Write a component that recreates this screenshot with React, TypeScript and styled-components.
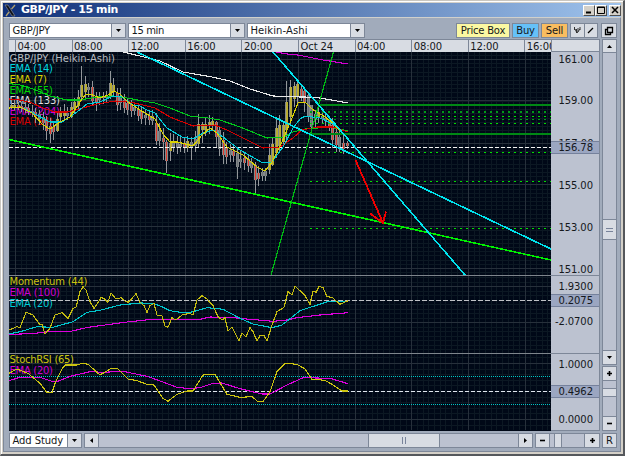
import React from 'react';
import styled, { createGlobalStyle } from 'styled-components';

// ---------------------------------------------------------------------------
// Colors
// ---------------------------------------------------------------------------
const colors = {
  frame: '#d4d0c8',
  body: '#a1abbb',
  panel: '#bcc2d0',
  control: '#d8dce3',
  border: '#7d8798',
  highlight: '#9ba6c1',
  chart: '#000817',
  gridMinor: '#0c1823',
  gridMajor: '#27303b',
  divider: '#7e858c',
  text: '#15181c',
};

// ---------------------------------------------------------------------------
// Chart data, in window coordinates
// ---------------------------------------------------------------------------
const LEFT = 9;
const WIDTH = 542;
const BAR_START = 11.2;
const BAR_STEP = 3.535;
const HOUR_STEP = 56.62;

const TIMES = ['04:00', '08:00', '12:00', '16:00', '20:00', 'Oct 24', '04:00', '08:00', '12:00', '16:00'];

type Candle = [number, number, number, number, ('u' | 'd' | 'n')];

// high, body top, body bottom, low, direction
const CANDLES: Candle[] = [
  [101, 105, 108, 109, 'u'], [100, 105, 108, 110, 'u'], [102, 105, 107, 110, 'd'], [102, 106, 108, 112, 'd'],
  [103, 107, 110, 113, 'n'], [104, 108, 112, 115, 'd'], [105, 111, 113, 117, 'n'], [108, 112, 116, 123, 'd'],
  [110, 114, 119, 125, 'n'], [112, 117, 123, 130, 'd'], [116, 120, 131, 140, 'd'], [118, 126, 134, 143, 'd'],
  [122, 127, 132, 140, 'd'], [112, 119, 131, 132, 'u'], [107, 112, 117, 122, 'u'], [104, 112, 116, 120, 'u'],
  [107, 113, 116, 120, 'n'], [102, 107, 117, 118, 'u'], [98, 102, 109, 114, 'u'], [90, 97, 106, 110, 'u'],
  [66, 85, 97, 100, 'u'], [76, 84, 92, 98, 'u'], [83, 87, 90, 97, 'n'], [81, 87, 101, 105, 'd'],
  [92, 96, 103, 111, 'd'], [92, 96, 100, 105, 'n'], [92, 96, 98, 104, 'n'], [91, 95, 98, 103, 'n'],
  [71, 83, 96, 99, 'u'], [78, 85, 92, 97, 'u'], [88, 93, 105, 111, 'd'], [88, 97, 103, 110, 'n'],
  [94, 100, 108, 113, 'd'], [98, 103, 110, 115, 'd'], [100, 104, 111, 117, 'd'], [103, 107, 111, 115, 'n'],
  [104, 109, 116, 121, 'd'], [107, 111, 119, 124, 'd'], [110, 115, 118, 125, 'n'], [112, 116, 120, 125, 'd'],
  [110, 116, 121, 125, 'n'], [113, 123, 141, 145, 'd'], [123, 131, 141, 146, 'n'], [128, 138, 142, 160, 'd'],
  [140, 142, 161, 173, 'd'], [133, 143, 151, 161, 'u'], [134, 143, 147, 152, 'n'], [136, 143, 148, 154, 'n'],
  [137, 144, 147, 152, 'n'], [138, 144, 148, 153, 'd'], [136, 141, 148, 152, 'u'], [137, 142, 147, 160, 'n'],
  [131, 139, 146, 152, 'n'], [114, 124, 144, 147, 'u'], [122, 124, 130, 143, 'u'], [117, 124, 130, 136, 'u'],
  [115, 122, 126, 134, 'u'], [117, 121, 126, 131, 'u'], [121, 122, 137, 147, 'd'], [126, 130, 149, 156, 'n'],
  [132, 140, 155, 164, 'd'], [142, 147, 157, 164, 'd'], [144, 150, 155, 162, 'n'], [145, 151, 156, 162, 'd'],
  [148, 153, 167, 179, 'n'], [150, 159, 162, 168, 'n'], [153, 158, 163, 170, 'd'], [154, 159, 166, 172, 'd'],
  [158, 162, 168, 173, 'n'], [162, 165, 180, 193, 'd'], [166, 173, 179, 186, 'd'], [168, 172, 176, 181, 'n'],
  [168, 171, 176, 181, 'n'], [144, 155, 170, 174, 'u'], [138, 144, 165, 166, 'u'], [119, 128, 153, 158, 'u'],
  [115, 125, 146, 151, 'u'], [122, 125, 142, 147, 'u'], [81, 102, 130, 143, 'u'], [80, 87, 117, 125, 'u'],
  [82, 86, 99, 107, 'u'], [80, 84, 96, 104, 'u'], [85, 89, 97, 101, 'd'], [87, 91, 103, 112, 'd'],
  [92, 95, 117, 122, 'n'], [105, 105, 127, 135, 'n'], [110, 114, 119, 127, 'n'], [107, 112, 117, 123, 'u'],
  [111, 116, 119, 124, 'n'], [113, 118, 121, 128, 'n'], [116, 120, 126, 131, 'd'], [118, 125, 140, 148, 'd'],
  [127, 132, 145, 152, 'd'], [131, 137, 148, 152, 'n'], [133, 143, 149, 154, 'd'], [141, 143, 146, 149, 'd'],
];

const BODY_FILL = { u: '#b9ad35', d: '#dd3a2c', n: '#6d7378' };

const PRICE_LINES = [
  { color: '#00c81a', points: '9,83.5 20,85 33,89 50,96 67,100 80,100 97,97 113,96 127,98 143,101 155,103 170,108 190,116 208,118 220,120 240,127 267,138 283,137.5 293,132 305,129 330,127 348,131' },
  { color: '#d40000', points: '9,99 20,100 32,103 43,108 55,112 68,112 83,108 97,104 115,101 130,102 143,105 155,108 170,117 193,126 215,125 227,130 247,140 263,148 280,147 293,138 302,130 317,127 333,127 348,132' },
  { color: '#e8e8e8', points: '123,52 140,56 160,61 183,72 212,77 230,81 250,89 273,96 300,97 305,97 320,98 348,103' },
  { color: '#d400d4', points: '276,52 287,54 298,55 323,60 348,64' },
  { color: '#00ccd8', points: '9,108 20,107 33,113 50,122 62,122 73,115 87,104 100,102 113,96 122,97 133,105 140,106 147,110 155,113 167,128 182,137 193,139 203,133 213,130 223,137 240,150 263,163 272,162 283,147 293,128 300,119 305,116 320,118 333,124 348,139' },
  { color: '#dcd400', points: '9,108 20,107 32,113 43,125 50,129 60,122 70,117 78,105 85,95 90,94 100,98 108,95 114,91 120,94 128,102 140,110 155,119 163,134 170,142 178,142 193,146 202,135 210,128 217,133 227,147 243,155 257,167 265,171 272,162 282,142 292,118 298,103 305,102 312,109 325,117 333,123 342,133 348,139' },
];

const MOMENTUM_LINES = [
  { color: '#dd00dd', points: '9,334.5 33,333.5 50,331.5 70,331.5 87,327.5 127,322 150,319.5 200,319.3 210,317 233,317.7 250,319.3 273,321.3 287,320 297,317.7 320,315 348,312.7' },
  { color: '#00c4cc', points: '9,334 20,331.7 37,326.7 53,327.3 73,321.7 87,312.3 100,310.3 120,305 140,303 153,303.3 162,306.7 170,310.7 183,312.7 190,312.5 207,307.7 223,309.3 240,318.3 253,324 272,327.7 282,325 300,310.7 328,301.5 348,301.3' },
  { color: '#c4bc10', points: '9,330 17,326.7 20,327.7 26,312.3 33,315 40,325 42,324.3 45,334 50,328.3 55,315 62,312.7 68,318.3 73,308.3 76,307.3 80,291.7 83,286.7 86,290 90,301.7 94,308.3 97,304.3 101,297.7 104,298.3 108,302.3 111,293 116,299 121,297.7 125,301 128,302.3 132,298.3 136,293.7 140,302.3 144,305.7 147,312.3 150,305.7 154,303.3 157,315 162,316 165,326 168,327.3 172,317.7 176,320 182,315 190,313.3 193,315 197,300 202,295.7 207,299 213,305.7 218,316.7 222,320 225,317.7 228,331 232,327 239,340.7 242,333.3 246,336.7 250,327.7 253,331.7 257,341 260,335.7 264,335.7 267,341 272,325 277,311.7 284,307.3 288,291.7 292,295 295,286.3 300,290.7 305,295.7 310,304.3 313,291 316,292.3 319,286.3 323,287.7 327,296.7 332,297.3 340,304.3 348,300.7' },
];

const STOCH_LINES = [
  { color: '#dd00dd', points: '9,380.7 20,377.3 40,377.3 52,381.3 58,381.3 70,376.3 90,371.7 103,372.3 123,371.3 147,376.3 162,381.7 177,387.3 190,388.7 200,387.7 213,383.3 222,383 240,388.7 262,394 270,394 287,385 303,377.7 330,378.3 348,383.7' },
  { color: '#ccc410', points: '9,373.3 17,369 28,373.3 40,383.3 47,392.7 52,392.3 55,383.3 62,369 65,365 77,365 82,363.3 88,364.3 100,375 112,368 118,369 128,379 137,380.7 147,384.3 154,385 163,398.3 168,401.3 177,394.3 187,391 193,391 203,375 215,374.3 227,394.3 240,397.3 252,396.7 258,401.7 263,401.7 270,391.7 277,371.7 285,363.3 297,364.3 305,369 312,379.3 325,380.3 333,385 342,391 348,391' },
];

const FIB_LEVELS = [
  { y: 112, color: '#009a18', h: 2 },
  { y: 116.5, color: '#00e000', h: 1 },
  { y: 119.5, color: '#00a018', h: 1 },
  { y: 123.5, color: '#00e000', h: 1 },
  { y: 152.5, color: '#00e000', h: 1 },
  { y: 181.5, color: '#00e000', h: 1 },
  { y: 228.5, color: '#00e000', h: 1 },
];

// ---------------------------------------------------------------------------
// Chart pieces
// ---------------------------------------------------------------------------
interface GridProps {
  top: number;
  height: number;
  majors: number[];
  step: number;
}

const Grid = ({ top, height, majors, step }: GridProps) => {
  const minorX: number[] = [];
  for (let x = 15.5 - HOUR_STEP / 10; x < LEFT + WIDTH; x += HOUR_STEP / 10) minorX.push(x);
  const minorY: number[] = [];
  for (let y = majors[0] - step * 20; y < top + height; y += step) if (y > top) minorY.push(y);
  return (
    <g shapeRendering="crispEdges">
      {minorX.map((x) => (
        <line key={x} x1={x} x2={x} y1={top} y2={top + height} stroke={colors.gridMinor} />
      ))}
      {minorY.map((y) => (
        <line key={y} x1={LEFT} x2={LEFT + WIDTH} y1={y} y2={y} stroke={colors.gridMinor} />
      ))}
      {TIMES.map((_, i) => (
        <line key={i} x1={15.5 + i * HOUR_STEP} x2={15.5 + i * HOUR_STEP} y1={top} y2={top + height} stroke={colors.gridMajor} />
      ))}
      {majors.map((y) => (
        <line key={y} x1={LEFT} x2={LEFT + WIDTH} y1={y} y2={y} stroke={colors.gridMajor} />
      ))}
    </g>
  );
};

const Lines = ({ lines }: { lines: { color: string; points: string }[] }) => (
  <g shapeRendering="crispEdges" fill="none">
    {lines.map((l) => (
      <polyline key={l.points} points={l.points} stroke={l.color} strokeWidth={1.1} />
    ))}
  </g>
);

const Labels = ({ y, items }: { y: number; items: [string, string, number][] }) => (
  <g fontFamily="'DejaVu Sans', sans-serif" fontSize="10">
    {items.map(([text, fill, width], i) => (
      <text key={text} x={9.5} y={y + i * 10.6} fill={fill} textLength={width}>
        {text}
      </text>
    ))}
  </g>
);

const PricePane = () => (
  <Pane height={223} viewBox="9 52 542 223">
    <Grid top={52} height={223} step={4.18} majors={[59.5, 100.5, 143.5, 184.5, 226.5, 268.5]} />
    <Labels
      y={61.7}
      items={[
        ['GBP/JPY (Heikin-Ashi)', '#b8bcc0', 105.5],
        ['EMA (14)', '#00d8e0', 43.5],
        ['EMA (7)', '#d8d000', 37.5],
        ['EMA (55)', '#00d800', 43.5],
        ['EMA (133)', '#e0e0e0', 50.5],
        ['EMA (204)', '#d000d0', 50.5],
        ['EMA (54)', '#d80000', 43.5],
      ]}
    />
    <g shapeRendering="crispEdges">
      {CANDLES.map(([high, top, bottom, low, dir], i) => {
        const x = Math.round(BAR_START + i * BAR_STEP - 0.5);
        return (
          <g key={i}>
            <rect x={x} y={high} width={1} height={low - high} fill="#92969a" />
            <rect x={x - 1} y={top} width={3} height={bottom - top} fill="#85898a" />
            <rect x={x} y={top} width={dir === 'u' ? 2 : 1} height={bottom - top} fill={BODY_FILL[dir]} />
          </g>
        );
      })}
    </g>
    <g shapeRendering="crispEdges">
      <rect x={320} y={104} width={231} height={2} fill="#008814" />
      <rect x={310} y={133} width={241} height={2} fill="#008814" />
      {FIB_LEVELS.map((l) => (
        <line key={l.y} x1={310} x2={551} y1={l.y} y2={l.y} stroke={l.color} strokeWidth={l.h} strokeDasharray="2 4" />
      ))}
      <line x1={9} x2={551} y1={147.5} y2={147.5} stroke="#f4f4f4" strokeDasharray="4 2" />
    </g>
    <Lines lines={PRICE_LINES} />
    <g fill="none" shapeRendering="crispEdges">
      <path d="M9 139.5 551 260" stroke="#00f000" strokeWidth={1.6} />
      <path d="M271 275 333.5 52" stroke="#00b814" strokeWidth={1.2} />
      <path d="M137 52 551 249M273 52 465 275" stroke="#00e4ee" strokeWidth={1.6} />
      <path d="M355.5 160 383 223M370 213.500 383 223 386 211.500" stroke="#f00000" strokeWidth={1.8} />
    </g>
  </Pane>
);

const MomentumPane = () => (
  <Pane height={77} viewBox="9 276 542 77">
    <Grid top={276} height={77} step={4.5} majors={[286.5, 322.5]} />
    <Labels
      y={285.3}
      items={[
        ['Momentum (44)', '#ccc410', 78],
        ['EMA (100)', '#d000d0', 50.5],
        ['EMA (20)', '#00d0d8', 43.5],
      ]}
    />
    <line x1={9} x2={551} y1={300.5} y2={300.5} stroke="#c0c2c6" strokeDasharray="5 2" shapeRendering="crispEdges" />
    <Lines lines={MOMENTUM_LINES} />
  </Pane>
);

const StochPane = () => (
  <Pane height={76} viewBox="9 354 542 76">
    <Grid top={354} height={76} step={5.6} majors={[363.5, 419.5]} />
    <Labels
      y={363.3}
      items={[
        ['StochRSI (65)', '#ccc410', 64.5],
        ['EMA (20)', '#d000d0', 43.5],
      ]}
    />
    <g shapeRendering="crispEdges">
      <path d="M9 376.500H551M9 404.500H551" stroke="#00c4c4" strokeDasharray="1 1" />
      <line x1={9} x2={551} y1={391.5} y2={391.5} stroke="#dfe6ee" strokeDasharray="4 2" />
    </g>
    <Lines lines={STOCH_LINES} />
  </Pane>
);

// ---------------------------------------------------------------------------
// Controls
// ---------------------------------------------------------------------------
type Dir = 'up' | 'down' | 'left' | 'right';

const ARROWS: Record<Dir, string> = {
  up: 'M1 5 3.500 2 6 5Z',
  down: 'M1 2 6 2 3.500 5Z',
  left: 'M5 1 5 6 2 3.500Z',
  right: 'M2 1 2 6 5 3.500Z',
};

const Arrow = ({ dir }: { dir: Dir }) => (
  <svg width="7" height="7" viewBox="0 0 7 7">
    <path d={ARROWS[dir]} fill="#000" />
  </svg>
);

const Sign = ({ plus }: { plus?: boolean }) => (
  <svg width="7" height="7" viewBox="0 0 7 7">
    <path d={plus ? 'M1 3.500H6M3.500 1V6' : 'M1 3.500H6'} stroke="#000" strokeWidth="1.600" />
  </svg>
);

const Select = ({ label, width, spacing = 0 }: { label: string; width: number; spacing?: number }) => (
  <Combo $width={width}>
    <ComboText $spacing={spacing}>{label}</ComboText>
    <ComboArrow>
      <Arrow dir="down" />
    </ComboArrow>
  </Combo>
);

const App = () => (
  <Desktop>
    <GlobalStyle />
    <TitleBar>
      <svg width="13" height="13" viewBox="0 0 13 13" fill="none">
        <path d="M1 1H4L11 12H8Z" fill="#10131a" stroke="#868a90" strokeWidth=".7" />
        <path d="M11 1 7.500 5M5 8 2 12" stroke="#b0a070" strokeWidth="1.300" />
      </svg>
      <Title>GBP/JPY - 15 min</Title>
      <WindowButton>
        <svg width="10" height="8"><path d="M2 6.500H7" stroke="#000" strokeWidth="2" /></svg>
      </WindowButton>
      <WindowButton>
        <svg width="10" height="8"><path d="M1.500 1H8.500V7.500H1.500ZM1.500 1.500H8.500" fill="none" stroke="#000" /></svg>
      </WindowButton>
      <WindowButton $gap>
        <svg width="10" height="8"><path d="M2 1 8 7M8 1 2 7" stroke="#000" strokeWidth="1.500" /></svg>
      </WindowButton>
    </TitleBar>

    <Body>
      <Toolbar>
        <Select label="GBP/JPY" width={117} spacing={-0.2} />
        <Select label="15 min" width={117} spacing={-0.4} />
        <Select label="Heikin-Ashi" width={118} spacing={0.1} />
        <Spacer />
        <Action $color="#fbf8a2" $width={54}>Price Box</Action>
        <Action $color="#65c1f8" $width={27}>Buy</Action>
        <Action $color="#f9bd60" $width={27}>Sell</Action>
        <ToolPair>
          <ToolCell>
            <svg width="9" height="9" viewBox="0 0 9 9" fill="none" stroke="#333">
              <path d="M1.500 1V4M3.500 3V7M5 2V6M7 1V4M2 3 4 7 7 3" />
            </svg>
          </ToolCell>
          <ToolCell>
            <svg width="9" height="9" viewBox="0 0 9 9"><path d="M2 7 7 2" stroke="#000" strokeWidth="1.300" /></svg>
          </ToolCell>
        </ToolPair>
        <Detach>
          <svg width="10" height="10" viewBox="0 0 10 10" fill="none" stroke="#000" strokeWidth="1.300">
            <path d="M3.500 1.500H8.500V6.500H3.500ZM3.500 3.500H1.500V8.500H6.500V6.500" />
          </svg>
        </Detach>
      </Toolbar>

      <Main>
        <ChartFrame>
          <TimeAxis>
            <TimeLead />
            {TIMES.map((t, i) => (
              <TimeCell key={i}>{t}</TimeCell>
            ))}
          </TimeAxis>
          <PricePane />
          <Divider />
          <MomentumPane />
          <Divider />
          <StochPane />
        </ChartFrame>

        <PriceAxis>
          <AxisHead />
          <AxisSection $height={223}>
            <AxisLabel $gap={1}>161.00</AxisLabel>
            <AxisLabel $gap={27}>159.00</AxisLabel>
            <AxisClip>157.00</AxisClip>
            <AxisValue $gap={0}>156.78</AxisValue>
            <AxisLabel $gap={25}>155.00</AxisLabel>
            <AxisLabel $gap={28}>153.00</AxisLabel>
            <AxisLabel $gap={28}>151.00</AxisLabel>
          </AxisSection>
          <AxisSection $height={77}>
            <AxisLabel $gap={4}>1.9300</AxisLabel>
            <AxisValue $gap={0}>0.2075</AxisValue>
            <AxisLabel $gap={8} $negative>-2.0700</AxisLabel>
          </AxisSection>
          <AxisSection $height={76}>
            <AxisLabel $gap={4}>1.0000</AxisLabel>
            <AxisValue $gap={13}>0.4962</AxisValue>
            <AxisLabel $gap={15}>0.0000</AxisLabel>
          </AxisSection>
        </PriceAxis>

        <VScroll>
          <Cell $h={14}><Arrow dir="up" /></Cell>
          <Cell $h={167} $track />
          <Cell $h={20}><GripH /></Cell>
          <Cell $h={111} $track />
          <Cell $h={14}><Arrow dir="down" /></Cell>
          <Gap />
          <Cell $h={14}><Sign plus /></Cell>
          <Cell $h={8} $track />
          <Cell $h={8} />
          <Cell $h={20} $track />
          <Cell $h={14}><Sign /></Cell>
        </VScroll>
      </Main>

      <BottomBar>
        <Select label="Add Study" width={73} spacing={-0.1} />
        <HScroll $width={449}>
          <Cell $w={15}><Arrow dir="left" /></Cell>
          <Cell $w={270} $track />
          <Cell $w={71}><GripV /></Cell>
          <Cell $w={79} $track />
          <Cell $w={14}><Arrow dir="right" /></Cell>
        </HScroll>
        <HScroll $width={65}>
          <Cell $w={15}><Sign /></Cell>
          <Cell $w={5} $track />
          <Cell $w={7} />
          <Cell $w={23} $track />
          <Cell $w={15}><Sign plus /></Cell>
        </HScroll>
        <Reset>R</Reset>
      </BottomBar>
    </Body>
  </Desktop>
);

// ---------------------------------------------------------------------------
// Styled components
// ---------------------------------------------------------------------------
const GlobalStyle = createGlobalStyle`
  * { box-sizing: border-box; }
  body { margin: 0; overflow: hidden; }
  svg { display: block; flex-shrink: 0; }
`;

const Desktop = styled.div`
  width: 625px;
  height: 456px;
  padding: 1px 2px 1px 1px;
  border: solid;
  border-width: 1px 2px 2px 1px;
  border-color: #c9c6c0 #55585c #55585c #c9c6c0;
  background: ${colors.frame};
  box-shadow: inset 1px 1px #fff;
  font-family: 'DejaVu Sans', sans-serif;
  font-size: 10px;
  line-height: 12px;
  color: ${colors.text};
`;

const TitleBar = styled.div`
  display: flex;
  align-items: center;
  height: 14px;
  margin: 1px 0 0 1px;
  padding: 0 0 0 1px;
  background: linear-gradient(90deg, #0f2f78, #9fc3ec);
`;

const Title = styled.div`
  flex: 1;
  margin-left: 4px;
  color: #fff;
  font-size: 11px;
  font-weight: bold;
  letter-spacing: -0.45px;
`;

const WindowButton = styled.div<{ $gap?: boolean }>`
  display: flex;
  align-items: center;
  justify-content: center;
  width: 12px;
  height: 11px;
  margin-left: ${({ $gap }) => ($gap ? 2 : 0)}px;
  border: 1px solid;
  border-color: #fff #505050 #505050 #fff;
  background: ${colors.frame};
`;

const Body = styled.div`
  height: 435px;
  margin: 0 0 0 1px;
  padding: 5px 3px 0 5px;
  background: ${colors.body};
  border: 1px solid ${colors.border};
  border-top-color: #d0d0cc;
`;

const Toolbar = styled.div`
  display: flex;
  gap: 2px;
  height: 15px;
  margin-bottom: 1px;
`;

const Spacer = styled.div`
  flex: 1;
`;

const Combo = styled.div<{ $width: number }>`
  display: flex;
  width: ${({ $width }) => $width}px;
  height: 15px;
  border: 1px solid ${colors.border};
  background: #fff;
`;

const ComboText = styled.div<{ $spacing: number }>`
  flex: 1;
  padding-left: 2.5px;
  line-height: 14px;
  letter-spacing: ${({ $spacing }) => $spacing}px;
  white-space: nowrap;
`;

const ComboArrow = styled.div`
  display: flex;
  align-items: center;
  justify-content: center;
  width: 14px;
  border-left: 1px solid ${colors.border};
  background: ${colors.control};
`;

const Action = styled.div<{ $color: string; $width: number }>`
  width: ${({ $width }) => $width}px;
  border: 1px solid ${colors.border};
  background: ${({ $color }) => $color};
  line-height: 14px;
  text-align: center;
  letter-spacing: -0.2px;
  white-space: nowrap;
`;

const ToolPair = styled.div`
  display: flex;
  width: 28px;
  border: 1px solid ${colors.border};
`;

const ToolCell = styled.div`
  display: flex;
  flex: 1;
  align-items: center;
  justify-content: center;
  background: ${colors.control};

  & + & {
    border-left: 1px solid ${colors.border};
  }
`;

const Detach = styled.div`
  display: flex;
  align-items: center;
  justify-content: center;
  width: 16px;
  margin-left: 1px;
  border: 1px solid ${colors.border};
  background: ${colors.control};
`;

const Main = styled.div`
  display: flex;
  height: 392px;
`;

const ChartFrame = styled.div`
  width: 542px;
  background: ${colors.chart};
`;

const Pane = styled.svg`
  width: 542px;
  background: ${colors.chart};
`;

const Divider = styled.div`
  height: 1px;
  background: ${colors.divider};
`;

const TimeAxis = styled.div`
  display: flex;
  height: 13px;
  overflow: hidden;
  border-top: 1px solid ${colors.border};
  background: ${colors.control};
`;

const TimeLead = styled.div`
  flex: 0 0 6px;
`;

const TimeCell = styled.div`
  flex: 0 0 56.6px;
  padding-left: 1.5px;
  border-left: 1px solid ${colors.border};
  line-height: 13px;
  letter-spacing: -0.1px;
  white-space: nowrap;
`;

const PriceAxis = styled.div`
  width: 49px;
  border-right: 1px solid ${colors.border};
  background: ${colors.panel};
`;

const AxisHead = styled.div`
  height: 13px;
  border: solid ${colors.border};
  border-width: 1px 0 1px 1px;
  background: ${colors.control};
`;

const AxisSection = styled.div<{ $height: number }>`
  height: ${({ $height }) => $height + 1}px;
  overflow: hidden;
  border-bottom: 1px solid ${colors.border};
`;

const AxisLabel = styled.div<{ $gap: number; $negative?: boolean }>`
  height: 14px;
  margin-top: ${({ $gap }) => $gap}px;
  padding-left: ${({ $negative }) => ($negative ? 4 : 7.5)}px;
  line-height: 14px;
  letter-spacing: -0.1px;
`;

const AxisClip = styled.div`
  height: 2px;
  margin-top: 31px;
  padding-left: 7.5px;
  overflow: hidden;
  line-height: 10px;
`;

const AxisValue = styled.div<{ $gap: number }>`
  height: 13px;
  margin-top: ${({ $gap }) => $gap}px;
  padding-left: 7.5px;
  border: solid #75819c;
  border-width: 1px 0;
  background: ${colors.highlight};
  line-height: 12px;
  letter-spacing: -0.1px;
`;

const VScroll = styled.div`
  display: flex;
  flex-direction: column;
  width: 15px;
  margin-left: 2px;
`;

const HScroll = styled.div<{ $width: number }>`
  display: flex;
  width: ${({ $width }) => $width}px;
`;

const Cell = styled.div<{ $w?: number; $h?: number; $track?: boolean }>`
  display: flex;
  flex: 0 0 ${({ $w, $h }) => $w ?? $h}px;
  align-items: center;
  justify-content: center;
  border: 1px solid ${colors.border};
  ${({ $w }) => ($w ? 'border-left-width: 0;' : 'border-top-width: 0;')}
  background: ${({ $track }) => ($track ? colors.panel : colors.control)};

  &:first-child {
    border-width: 1px;
  }
`;

const Gap = styled.div`
  height: 2px;
  border-bottom: 1px solid ${colors.border};
`;

const GripH = styled.div`
  width: 7px;
  height: 4px;
  border: solid #78839a;
  border-width: 1px 0;
`;

const GripV = styled.div`
  width: 4px;
  height: 7px;
  border: solid #78839a;
  border-width: 0 1px;
`;

const BottomBar = styled.div`
  display: flex;
  gap: 2px;
  height: 15px;
  margin-top: 2px;
`;

const Reset = styled.div`
  width: 15px;
  border: 1px solid ${colors.border};
  background: ${colors.control};
  line-height: 14px;
  text-align: center;
`;

export default App;
